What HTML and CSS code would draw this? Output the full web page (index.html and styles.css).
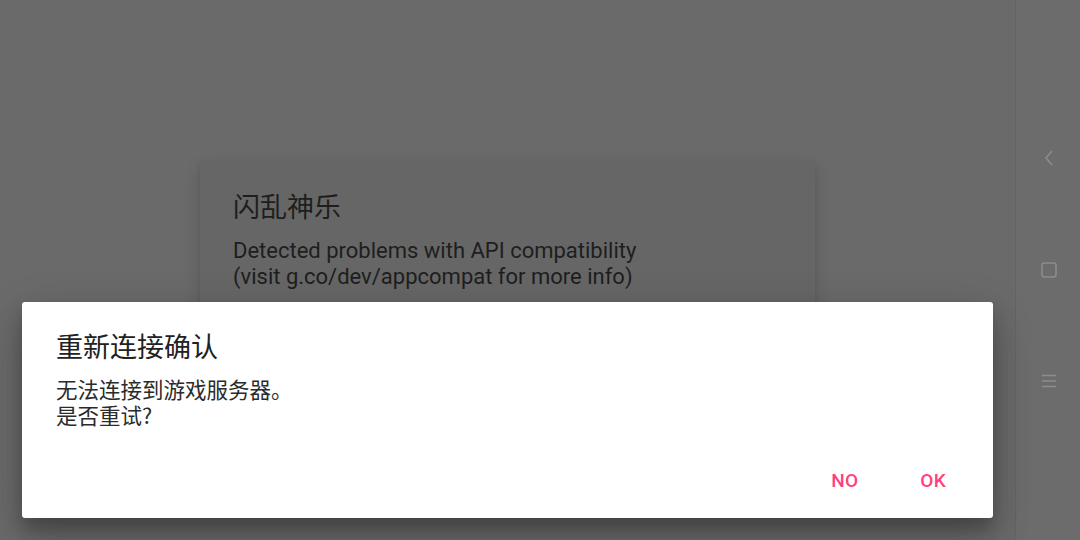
FILE: index.html
```html
<!DOCTYPE html>
<html lang="zh">
<head>
<meta charset="utf-8">
<link rel="stylesheet" href="styles.css">
</head>
<body>
<div class="screen">
  <main class="stage">
    <section class="card">
      <h2 class="card-title">闪乱神乐</h2>
      <p class="card-text">Detected problems with API compatibility<br>(visit g.co/dev/appcompat for more info)</p>
    </section>
    <section class="dialog">
      <h1 class="dialog-title">重新连接确认</h1>
      <p class="dialog-text">无法连接到游戏服务器。<br>是否重试?</p>
      <div class="actions">
        <button class="btn">NO</button>
        <button class="btn">OK</button>
      </div>
    </section>
  </main>
  <nav class="navbar">
    <svg class="nav-icon" width="16" height="20" viewBox="0 0 16 20"><path d="M11 3 L5 10 L11 17" fill="none" stroke="#8c8c8c" stroke-width="1.6"/></svg>
    <svg class="nav-icon" width="18" height="18" viewBox="0 0 18 18"><rect x="2" y="2" width="14" height="14" rx="2.5" fill="none" stroke="#8c8c8c" stroke-width="1.6"/></svg>
    <svg class="nav-icon" width="18" height="18" viewBox="0 0 18 18"><path d="M2 3.5 H16 M2 9 H16 M2 14.5 H16" fill="none" stroke="#8c8c8c" stroke-width="1.4"/></svg>
  </nav>
</div>
</body>
</html>
```
FILE: styles.css
```css
* { box-sizing: border-box; }
html, body { margin: 0; padding: 0; }
body {
  width: 1080px;
  height: 540px;
  overflow: hidden;
  font-family: Roboto, "Noto Sans CJK SC", sans-serif;
  background: #6a6a6a;
}
.screen {
  display: flex;
  width: 1080px;
  height: 540px;
}
.stage {
  position: relative;
  flex: 1;
  background: #6a6a6a;
}
.navbar {
  width: 65px;
  background: #6c6c6c;
  border-left: 1px solid #646464;
  display: flex;
  flex-direction: column;
  align-items: center;
  padding-top: 148px;
  padding-left: 2px;
  gap: 93px;
}
.nav-icon { display: block; }
.card {
  position: absolute;
  left: 200px;
  top: 162px;
  width: 615px;
  height: 200px;
  background: #666666;
  border-radius: 2px;
  box-shadow: 0 6px 18px rgba(0,0,0,0.12), 0 2px 6px rgba(0,0,0,0.08);
  padding: 28px 33px 0;
}
.card-title {
  margin: 0;
  font-family: "Noto Sans CJK SC", sans-serif;
  font-weight: 400;
  font-size: 27px;
  line-height: 32px;
  color: #1e1e1e;
}
.card-text {
  margin: 16px 0 0;
  font-family: Roboto, sans-serif;
  font-size: 22px;
  line-height: 26px;
  color: #1e1e1e;
}
.dialog {
  position: absolute;
  left: 22px;
  top: 302px;
  width: 971px;
  height: 216px;
  background: #ffffff;
  border-radius: 3px;
  box-shadow: 0 11px 15px rgba(0,0,0,0.2), 0 24px 38px rgba(0,0,0,0.14), 0 9px 46px rgba(0,0,0,0.12);
  padding: 28px 34px 0;
  display: flex;
  flex-direction: column;
}
.dialog-title {
  margin: 0;
  font-family: "Noto Sans CJK SC", sans-serif;
  font-weight: 400;
  font-size: 27px;
  line-height: 32px;
  color: #212121;
}
.dialog-text {
  margin: 14px 0 0;
  font-family: "Noto Sans CJK SC", sans-serif;
  font-size: 21.5px;
  line-height: 26px;
  color: #2b2b2b;
}
.actions {
  margin-top: auto;
  margin-right: -11px;
  display: flex;
  justify-content: flex-end;
  gap: 14px;
  padding-bottom: 13px;
}
.btn {
  border: 0;
  background: transparent;
  font-family: Roboto, sans-serif;
  font-weight: 500;
  font-size: 19px;
  color: #ff4081;
  padding: 0 24px;
  height: 48px;
  line-height: 48px;
  letter-spacing: 0.3px;
}
```
